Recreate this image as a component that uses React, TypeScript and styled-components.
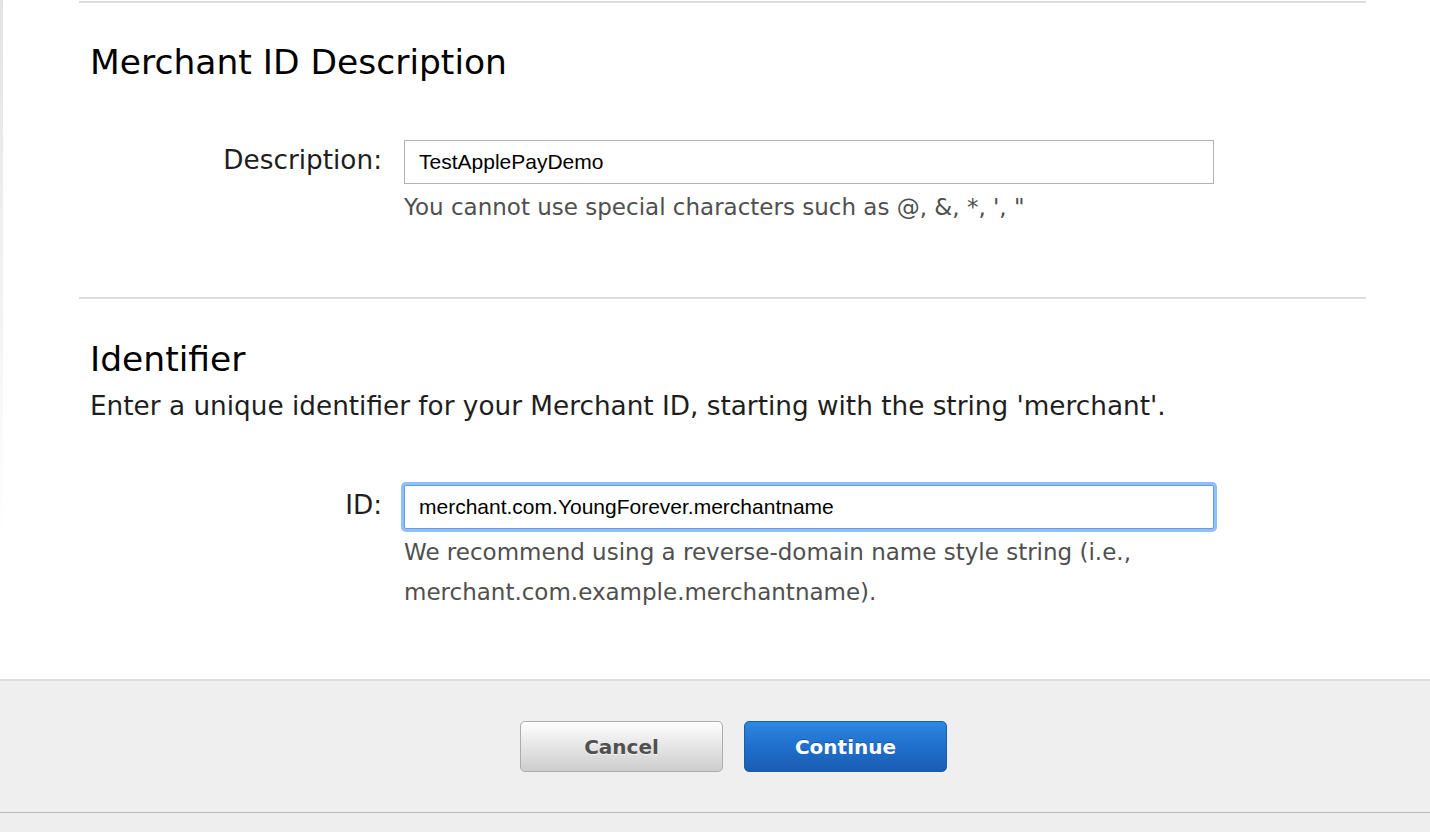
import React from 'react';
import styled, { createGlobalStyle, css } from 'styled-components';

const GlobalStyle = createGlobalStyle`
  html, body { margin: 0; padding: 0; background: #eeeeee; overflow: hidden; }
  body { font-family: "DejaVu Sans", "Noto Sans", sans-serif; }
  * { box-sizing: border-box; }
`;

const Card = styled.div`
  position: relative;
  background: #ffffff;
  padding-top: 1px;
  border-bottom: 1px solid #b9b9b9;
  box-shadow: 0 2px 4px rgba(0, 0, 0, 0.25);
  &::before {
    content: '';
    position: absolute;
    left: 0;
    top: 0;
    width: 3px;
    height: 540px;
    background: linear-gradient(to bottom, #e3e3e3, rgba(227, 227, 227, 0));
  }
`;

const Section = styled.section<{ $top: number; $bottom: number }>`
  margin: 0 64px 0 79px;
  border-top: 2px solid #dddddd;
  padding: ${(p) => p.$top}px 0 ${(p) => p.$bottom}px;
`;

const Heading = styled.h2`
  margin: 0 0 0 11px;
  font-size: 34.5px;
  line-height: 40px;
  font-weight: normal;
  color: #000000;
`;

const Subtitle = styled.p`
  margin: 11px 0 0 11px;
  font-size: 26.3px;
  line-height: 32px;
  color: #1e1e1e;
`;

const FieldRow = styled.div<{ $top: number }>`
  display: flex;
  align-items: flex-start;
  gap: 22px;
  margin-top: ${(p) => p.$top}px;
`;

const Label = styled.label<{ $lh: number }>`
  flex: 0 0 303px;
  text-align: right;
  font-size: 26.3px;
  line-height: ${(p) => p.$lh}px;
  color: #1e1e1e;
`;

const FieldBody = styled.div`
  width: 810px;
`;

const TextInput = styled.input<{ $focused?: boolean }>`
  display: block;
  width: 810px;
  height: 44px;
  margin: 0;
  padding: 0 14px;
  border: 1px solid #b3b3b3;
  border-radius: 0;
  background: #ffffff;
  font-family: "Liberation Sans", Arial, sans-serif;
  font-size: 21px;
  color: #000000;
  outline: none;
  ${(p) =>
    p.$focused &&
    css`
      border-color: #6a9be2;
      border-radius: 2px;
      box-shadow: 0 0 0 3px #8fc0fa;
    `}
`;

const Hint = styled.p`
  margin: 3px 0 0 0;
  font-size: 23px;
  line-height: 40px;
  color: #4f4f4f;
`;

const Footer = styled.div`
  display: flex;
  justify-content: center;
  gap: 21px;
  padding: 40px 0 40px 37px;
  border-top: 2px solid #dddddd;
  background: #efefef;
`;

const Button = styled.button<{ $primary?: boolean }>`
  width: 203px;
  height: 51px;
  border-radius: 5px;
  font-family: "DejaVu Sans", sans-serif;
  font-weight: bold;
  font-size: 20px;
  cursor: pointer;
  ${(p) =>
    p.$primary
      ? css`
          color: #ffffff;
          border: 1px solid #1560aa;
          background: linear-gradient(to bottom, #2e88e2 0%, #1f6fcc 50%, #1a5db2 100%);
          text-shadow: 0 -1px 0 rgba(0, 0, 0, 0.25);
        `
      : css`
          color: #505050;
          border: 1px solid #acacac;
          background: linear-gradient(to bottom, #fdfdfd 0%, #e6e6e6 50%, #cdcdcd 100%);
          text-shadow: 0 1px 0 rgba(255, 255, 255, 0.7);
        `}
`;

export default function App() {
  return (
    <>
      <GlobalStyle />
      <Card>
        <Section $top={39} $bottom={70}>
          <Heading>Merchant ID Description</Heading>
          <FieldRow $top={58}>
            <Label $lh={41}>Description:</Label>
            <FieldBody>
              <TextInput value="TestApplePayDemo" readOnly />
              <Hint>You cannot use special characters such as @, &amp;, *, ', "</Hint>
            </FieldBody>
          </FieldRow>
        </Section>
        <Section $top={40} $bottom={67}>
          <Heading>Identifier</Heading>
          <Subtitle>Enter a unique identifier for your Merchant ID, starting with the string 'merchant'.</Subtitle>
          <FieldRow $top={63}>
            <Label $lh={40}>ID:</Label>
            <FieldBody>
              <TextInput $focused value="merchant.com.YoungForever.merchantname" readOnly />
              <Hint>
                We recommend using a reverse-domain name style string (i.e., merchant.com.example.merchantname).
              </Hint>
            </FieldBody>
          </FieldRow>
        </Section>
        <Footer>
          <Button>Cancel</Button>
          <Button $primary>Continue</Button>
        </Footer>
      </Card>
    </>
  );
}
